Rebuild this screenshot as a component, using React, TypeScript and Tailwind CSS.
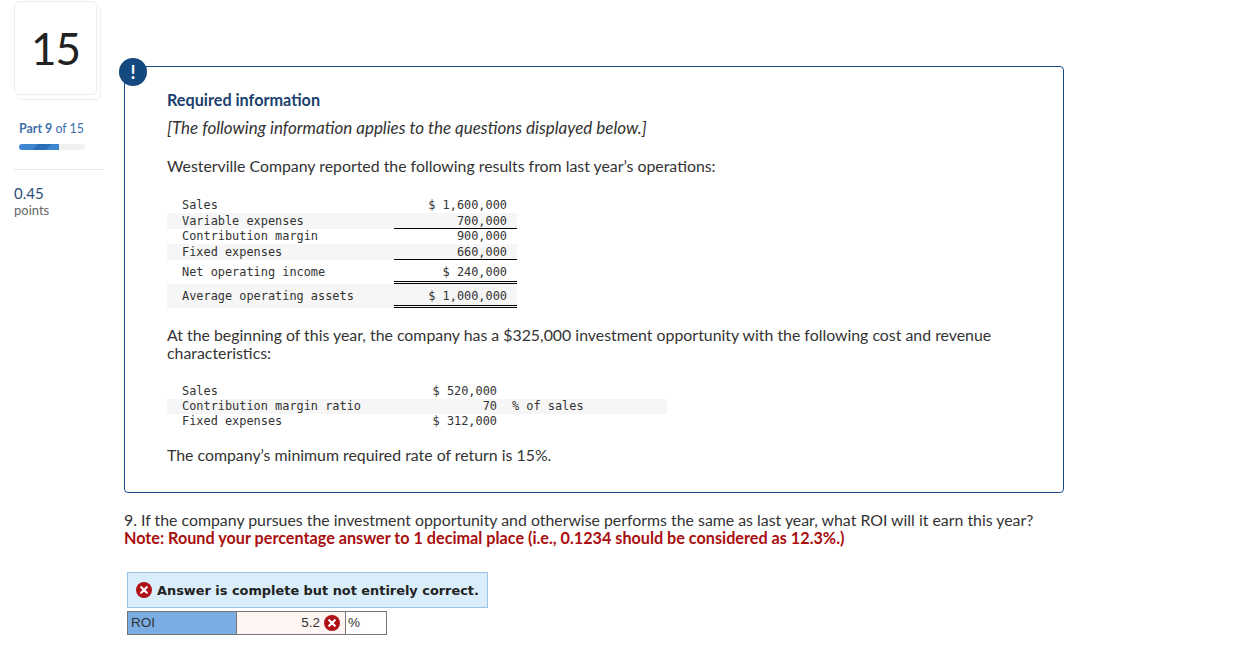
import React from 'react'

const XIcon = ({ className }: { className: string }) => (
  <svg viewBox="0 0 16 16" className={className}>
    <circle cx="8" cy="8" r="8" fill="#b01116" />
    <path d="M5.2 5.2l5.6 5.6M10.8 5.2l-5.6 5.6" stroke="#fff" strokeWidth="2.2" strokeLinecap="round" />
  </svg>
)

const Row = ({ label, amount, shaded, h, line }: { label: string; amount: string; shaded?: boolean; h: string; line?: string }) => (
  <div className={`flex ${h} ${shaded ? 'bg-[#f6f6f6]' : ''}`}>
    <div className="w-[227px] pl-[15px]">{label}</div>
    <div className={`w-[123px] pr-[10px] text-right ${line ?? ''}`}>{amount}</div>
  </div>
)

const Row2 = ({ label, amount, unit, shaded }: { label: string; amount: string; unit?: string; shaded?: boolean }) => (
  <div className={`flex h-[15px] leading-[15px] ${shaded ? 'bg-[#f6f6f6]' : ''}`}>
    <div className="w-[227px] pl-[15px]">{label}</div>
    <div className="w-[103px] text-right">{amount}</div>
    <div className="pl-[15px]">{unit}</div>
  </div>
)

export default function App() {
  return (
    <div className="flex min-h-[658px] bg-white font-['Lato','Open_Sans',sans-serif] text-[#333]">
      {/* Sidebar */}
      <div className="w-[124px] shrink-0 pl-[14px] pt-px">
        <div className="relative h-[99px] w-[87px]">
          <div className="absolute left-[3px] top-[4px] h-[95px] w-[84px] rounded-[5px] border border-[#eeeeee]" />
          <div className="relative flex h-[94px] w-[83px] items-center justify-center rounded-[5px] border border-[#eeeeee] bg-white text-[44px] leading-none tracking-[-1px] text-[#222]">
            15
          </div>
        </div>
        <div className="mt-[21px] pl-[5px] text-[12.4px] leading-[16px] text-[#3e6fa8]">
          <span className="font-bold">Part 9</span> of 15
        </div>
        <div className="ml-[5px] mt-[7px] h-[6px] w-[66px] rounded-full bg-[#f1f1f1]">
          <svg viewBox="0 0 40 6" className="block h-[6px] w-[40px] overflow-hidden rounded-l-full">
            <rect width="40" height="6" fill="#3c87d0" />
            <path d="M13 6l6-6h14l-6 6z" fill="#2a6fb5" />
          </svg>
        </div>
        <div className="mt-[19px] h-px w-[90px] bg-[#e8e8e8]" />
        <div className="mt-[15px] text-[15px] leading-[16px] text-[#2b4f78]">0.45</div>
        <div className="text-[13px] leading-[18px] text-[#666]">points</div>
      </div>

      {/* Main column */}
      <div className="w-[940px] pt-[66px]">
        <div className="relative h-[427px] rounded-[4px] border border-[#1b4a85] pl-[42px] pt-[23px]">
          <div className="absolute -left-[6px] -top-[9px] flex h-[28px] w-[28px] items-center justify-center rounded-full bg-[#14497f] text-[18px] font-bold text-white">
            !
          </div>
          <div className="text-[16.2px] font-bold leading-[20px] text-[#1b3f6e]">Required information</div>
          <div className="mt-[8px] text-[17px] italic leading-[20px]">[The following information applies to the questions displayed below.]</div>
          <div className="mt-[18px] text-[15.87px] leading-[20px]">Westerville Company reported the following results from last year’s operations:</div>

          <div className="mt-[22px] w-[350px] font-['DejaVu_Sans_Mono',monospace] text-[11.9px] text-[#333]">
            <Row label="Sales" amount="$ 1,600,000" h="h-[15px] leading-[15px]" />
            <Row label="Variable expenses" amount="700,000" shaded h="h-[16px] leading-[16px]" line="border-b border-black" />
            <Row label="Contribution margin" amount="900,000" h="h-[15px] leading-[15px]" />
            <Row label="Fixed expenses" amount="660,000" shaded h="h-[16px] leading-[16px]" line="border-b border-black" />
            <Row label="Net operating income" amount="$ 240,000" h="h-[24px] leading-[24px]" line="border-b-[3px] border-double border-black" />
            <Row label="Average operating assets" amount="$ 1,000,000" shaded h="h-[24px] leading-[24px]" line="border-b-[3px] border-double border-black" />
          </div>

          <div className="mt-[18px] w-[850px] text-[15.87px] leading-[18px]">
            At the beginning of this year, the company has a $325,000 investment opportunity with the following cost and revenue characteristics:
          </div>

          <div className="mt-[22px] w-[500px] font-['DejaVu_Sans_Mono',monospace] text-[11.9px] text-[#333]">
            <Row2 label="Sales" amount="$ 520,000" />
            <Row2 label="Contribution margin ratio" amount="70" unit="% of sales" shaded />
            <Row2 label="Fixed expenses" amount="$ 312,000" />
          </div>

          <div className="mt-[16px] text-[15.87px] leading-[20px]">The company’s minimum required rate of return is 15%.</div>
        </div>

        {/* Question */}
        <div className="mt-[18px] text-[15.87px] leading-[18px]">
          9. If the company pursues the investment opportunity and otherwise performs the same as last year, what ROI will it earn this year?
        </div>
        <div className="text-[16.2px] font-bold leading-[18px] text-[#a80f0f]">
          Note: Round your percentage answer to 1 decimal place (i.e., 0.1234 should be considered as 12.3%.)
        </div>

        {/* Result */}
        <div className="ml-[3px] mt-[25px] flex h-[36px] w-[361px] items-center gap-[5px] border border-[#9cc3e6] bg-[#d9edfa] pl-[8px] font-['DejaVu_Sans',sans-serif] text-[12.9px] font-bold text-[#222]">
          <XIcon className="h-[16px] w-[16px] shrink-0" />
          <span className="whitespace-nowrap pt-[2px]">Answer is complete but not entirely correct.</span>
        </div>
        <div className="ml-[3px] mt-[3px] flex h-[24px] w-[260px] border border-[#777] font-['Liberation_Sans',sans-serif] text-[13.5px] leading-[22px]">
          <div className="w-[109px] border-r border-[#777] bg-[#7aade3] pl-[3px]">ROI</div>
          <div className="flex w-[109px] items-center justify-end gap-[4px] border-r border-[#777] bg-[#fff5f3] pr-[5px]">
            5.2
            <XIcon className="h-[16px] w-[16px] shrink-0" />
          </div>
          <div className="pl-[2px]">%</div>
        </div>
      </div>
    </div>
  )
}
